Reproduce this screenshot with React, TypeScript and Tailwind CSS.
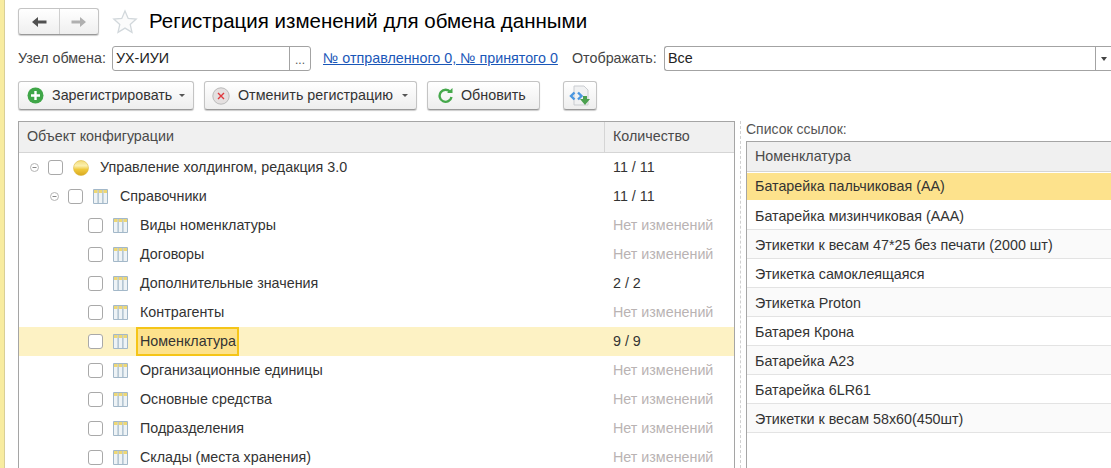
const FONT = "font-['Liberation_Sans',Arial,sans-serif]";

const rows = [
  { name: 'Виды номенклатуры', count: 'Нет изменений' },
  { name: 'Договоры', count: 'Нет изменений' },
  { name: 'Дополнительные значения', count: '2 / 2' },
  { name: 'Контрагенты', count: 'Нет изменений' },
  { name: 'Номенклатура', count: '9 / 9', active: true },
  { name: 'Организационные единицы', count: 'Нет изменений' },
  { name: 'Основные средства', count: 'Нет изменений' },
  { name: 'Подразделения', count: 'Нет изменений' },
  { name: 'Склады (места хранения)', count: 'Нет изменений' },
];

const links = [
  'Батарейка пальчиковая (АА)',
  'Батарейка мизинчиковая (ААА)',
  'Этикетки к весам 47*25 без печати (2000 шт)',
  'Этикетка самоклеящаяся',
  'Этикетка Proton',
  'Батарея Крона',
  'Батарейка А23',
  'Батарейка 6LR61',
  'Этикетки к весам 58х60(450шт)',
];

function Caret() {
  return <span className="ml-auto mr-[8px] h-0 w-0 border-x-[3px] border-t-[3px] border-x-transparent border-t-[#555]" />;
}

function Btn({ children, className }: { children: React.ReactNode; className: string }) {
  return (
    <div className={`flex h-[29px] shrink-0 items-center rounded-[3px] border border-[#c4c4c4] border-b-[#999] bg-gradient-to-b from-white to-[#eeeeee] shadow-[0_1px_1px_#ccc] ${className}`}>
      {children}
    </div>
  );
}

function Check() {
  return <span className="h-[15px] w-[15px] shrink-0 rounded-[3px] border border-[#a9a9a9] bg-white" />;
}

function TableIcon() {
  return (
    <svg width="15" height="15" viewBox="0 0 15 15" className="shrink-0">
      <rect x="0" y="0" width="15" height="15" rx="1" fill="#a3b8c9" />
      <rect x="1" y="1" width="3.500" height="13" fill="#eef3f6" />
      <rect x="5.750" y="1" width="3.500" height="13" fill="#eef3f6" />
      <rect x="10.500" y="1" width="3.500" height="13" fill="#eef3f6" />
      <rect x="1" y="1" width="3.500" height="3" fill="#eed774" />
      <rect x="5.750" y="1" width="3.500" height="3" fill="#eed774" />
      <rect x="10.500" y="1" width="3.500" height="3" fill="#eed774" />
    </svg>
  );
}

function Toggle() {
  return (
    <svg width="9" height="9" viewBox="0 0 9 9" className="shrink-0">
      <circle cx="4.500" cy="4.500" r="4" fill="none" stroke="#b5b5b5" />
      <path d="M2.500 4.500h4" stroke="#888" />
    </svg>
  );
}

export default function App() {
  return (
    <div className={`${FONT} flex h-[468px] w-[1111px] overflow-hidden bg-white text-[14.3px] text-[#333]`}>
      <div className="w-[5px] shrink-0 border-r border-[#d9cf96] bg-[#f8eca0]" />
      <div className="flex min-w-0 flex-1 flex-col pl-[13px] pt-[8px]">
        {/* header */}
        <div className="flex h-[27px] items-center">
          <div className="flex h-[27px] w-[81px] rounded-[3px] border border-[#c4c4c4] border-b-[#999] bg-gradient-to-b from-white to-[#efefef] shadow-[0_1px_1px_#ccc]">
            <div className="flex w-[41px] items-center justify-center border-r border-[#cfcfcf]">
              <svg width="16" height="12" viewBox="0 0 16 12"><path d="M7 1 1 6l6 5V7.500h8.500v-3H7z" fill="#505050" /></svg>
            </div>
            <div className="flex flex-1 items-center justify-center">
              <svg width="16" height="12" viewBox="0 0 16 12"><path d="M9 1l6 5-6 5V7.500H.500v-3H9z" fill="#b0b0b0" /></svg>
            </div>
          </div>
          <svg width="26" height="26" viewBox="0 0 26 26" className="ml-[13px]">
            <path d="M13 2l3.200 7.400 8 .7-6 5.300 1.800 7.900L13 19.100l-7 4.200 1.800-7.900-6-5.300 8-.7z" fill="#fbfbfb" stroke="#d2d8dc" strokeWidth="1.300" />
          </svg>
          <h1 className="ml-[11px] text-[20.5px] font-normal text-black">Регистрация изменений для обмена данными</h1>
        </div>

        {/* form row */}
        <div className="mt-[11px] flex h-[25px] items-center">
          <span className="w-[94px] shrink-0 text-[#444]">Узел обмена:</span>
          <div className="flex h-[25px] w-[199px] shrink-0 rounded-[3px] border border-[#a3a3a3] bg-white">
            <span className="flex-1 pl-[3px] leading-[23px] text-[#222]">УХ-ИУИ</span>
            <span className="w-[21px] border-l border-[#a3a3a3] text-center text-[12px] leading-[26px] text-[#555]">...</span>
          </div>
          <a className="ml-[12px] w-[249px] shrink-0 text-[#1a57b8] underline">№ отправленного 0, № принятого 0</a>
          <span className="w-[92px] shrink-0 text-[#444]">Отображать:</span>
          <div className="flex h-[25px] flex-1 rounded-l-[3px] border-y border-l border-[#a3a3a3] bg-white">
            <span className="flex-1 pl-[3px] leading-[23px] text-[#222]">Все</span>
            <span className="flex w-[16px] items-center justify-center border-l border-[#a3a3a3]">
              <span className="h-0 w-0 border-x-[3px] border-t-[4px] border-x-transparent border-t-[#444]" />
            </span>
          </div>
        </div>

        {/* buttons */}
        <div className="mt-[10px] flex items-center">
          <Btn className="w-[176px] pl-[8px]">
            <svg width="17" height="17" viewBox="0 0 17 17"><circle cx="8.500" cy="8.500" r="8" fill="#3fa648" /><path d="M8.500 4v9M4 8.500h9" stroke="#fff" strokeWidth="2.400" /></svg>
            <span className="ml-[8px]">Зарегистрировать</span>
            <Caret />
          </Btn>
          <Btn className="ml-[10px] w-[213px] pl-[7px]">
            <svg width="18" height="18" viewBox="0 0 18 18"><circle cx="9" cy="9" r="8.200" fill="#e4e0e0" stroke="#bbb" /><path d="M6 6l6 6M12 6l-6 6" stroke="#e0393e" strokeWidth="1.400" /></svg>
            <span className="ml-[8px]">Отменить регистрацию</span>
            <Caret />
          </Btn>
          <Btn className="ml-[10px] w-[113px] pl-[10px]">
            <svg width="15" height="16" viewBox="0 0 15 16"><path d="M12.400 4.200A6 6 0 1 0 13.500 9" fill="none" stroke="#45a84b" strokeWidth="2.400" /><path d="M9 5h5.500V0z" fill="#45a84b" /></svg>
            <span className="ml-[8px]">Обновить</span>
          </Btn>
          <Btn className="ml-[23px] w-[34px] justify-center">
            <svg width="22" height="22" viewBox="0 0 22 22">
              <path d="M5 1h10l4 4v15H5z" fill="#f0f1f2" stroke="#c9ccd0" />
              <path d="M5.500 7.500 2 11l3.500 3.500M9 7.500l3.500 3.500L9 14.500" fill="none" stroke="#4a97e0" strokeWidth="2.400" />
              <path d="M14 11h4v3h3l-5 6-5-6h3z" fill="#4ba04f" />
            </svg>
          </Btn>
        </div>

        {/* panels */}
        <div className="mt-[11px] flex min-h-0 flex-1">
          <div className="w-[717px] shrink-0 border border-b-0 border-[#a5a5a5]">
            <div className="flex h-[31px] border-b border-[#d5d5d5] bg-[#f0f0f0] leading-[29px] text-[#4a4a4a]">
              <span className="w-[586px] border-r border-[#d5d5d5] pl-[8px]">Объект конфигурации</span>
              <span className="pl-[8px]">Количество</span>
            </div>
            <div className="flex h-[29px] items-center">
              <div className="flex w-[586px] items-center pl-[11px]">
                <Toggle />
                <span className="ml-[9px] flex"><Check /></span>
                <svg width="16" height="16" viewBox="0 0 16 16" className="ml-[10px]">
                  <defs><linearGradient id="ball" x1="0" y1="0" x2="0" y2="1"><stop offset="0" stopColor="#f3dc7a" /><stop offset="0.35" stopColor="#fbf0b0" /><stop offset="0.6" stopColor="#f0c93c" /><stop offset="1" stopColor="#d8a820" /></linearGradient></defs>
                  <circle cx="8" cy="8" r="7.500" fill="url(#ball)" stroke="#dcb840" strokeWidth="0.600" />
                </svg>
                <span className="ml-[11px]">Управление холдингом, редакция 3.0</span>
              </div>
              <span className="pl-[8px]">11 / 11</span>
            </div>
            <div className="flex h-[29px] items-center">
              <div className="flex w-[586px] items-center pl-[31px]">
                <Toggle />
                <span className="ml-[9px] flex"><Check /></span>
                <span className="ml-[10px] flex"><TableIcon /></span>
                <span className="ml-[12px]">Справочники</span>
              </div>
              <span className="pl-[8px]">11 / 11</span>
            </div>
            {rows.map((r) => (
              <div key={r.name} className={`flex h-[29px] items-center ${r.active ? 'bg-[#fdf2c4]' : ''}`}>
                <div className="flex w-[586px] items-center pl-[69px]">
                  <Check />
                  <span className="ml-[10px] flex"><TableIcon /></span>
                  {r.active ? (
                    <span className="ml-[8px] flex h-[29px] items-center border-2 border-[#f5c518] bg-[#fde28c] pl-[2px] pr-[1px]">{r.name}</span>
                  ) : (
                    <span className="ml-[12px]">{r.name}</span>
                  )}
                </div>
                <span className={`pl-[8px] ${r.count.includes('/') ? '' : 'text-[#b9b3b3]'}`}>{r.count}</span>
              </div>
            ))}
          </div>

          <div className="ml-[5px] mr-[5px] w-0 border-l border-dashed border-[#d0d0d0]" />

          <div className="flex min-w-0 flex-1 flex-col">
            <span className="h-[20px] text-[14px] leading-[16px] text-[#555]">Список ссылок:</span>
            <div className="flex-1 border-l border-[#a5a5a5]">
              <div className="h-[31px] border-y border-b-[#d5d5d5] border-t-[#a5a5a5] bg-[#f0f0f0] pl-[8px] leading-[28px] text-[#4a4a4a]">Номенклатура</div>
              {links.map((l, i) => (
                <div
                  key={l}
                  className={`h-[29px] border-b pl-[8px] ${i === 0 ? 'border-t border-white border-b-white bg-[#fde28c] leading-[27px]' : 'border-[#e3e3e3] leading-[30px]'} ${i > 0 && i % 2 === 0 ? 'bg-[#fafafa]' : ''}`}
                >
                  {l}
                </div>
              ))}
            </div>
          </div>
        </div>
      </div>
    </div>
  );
}
